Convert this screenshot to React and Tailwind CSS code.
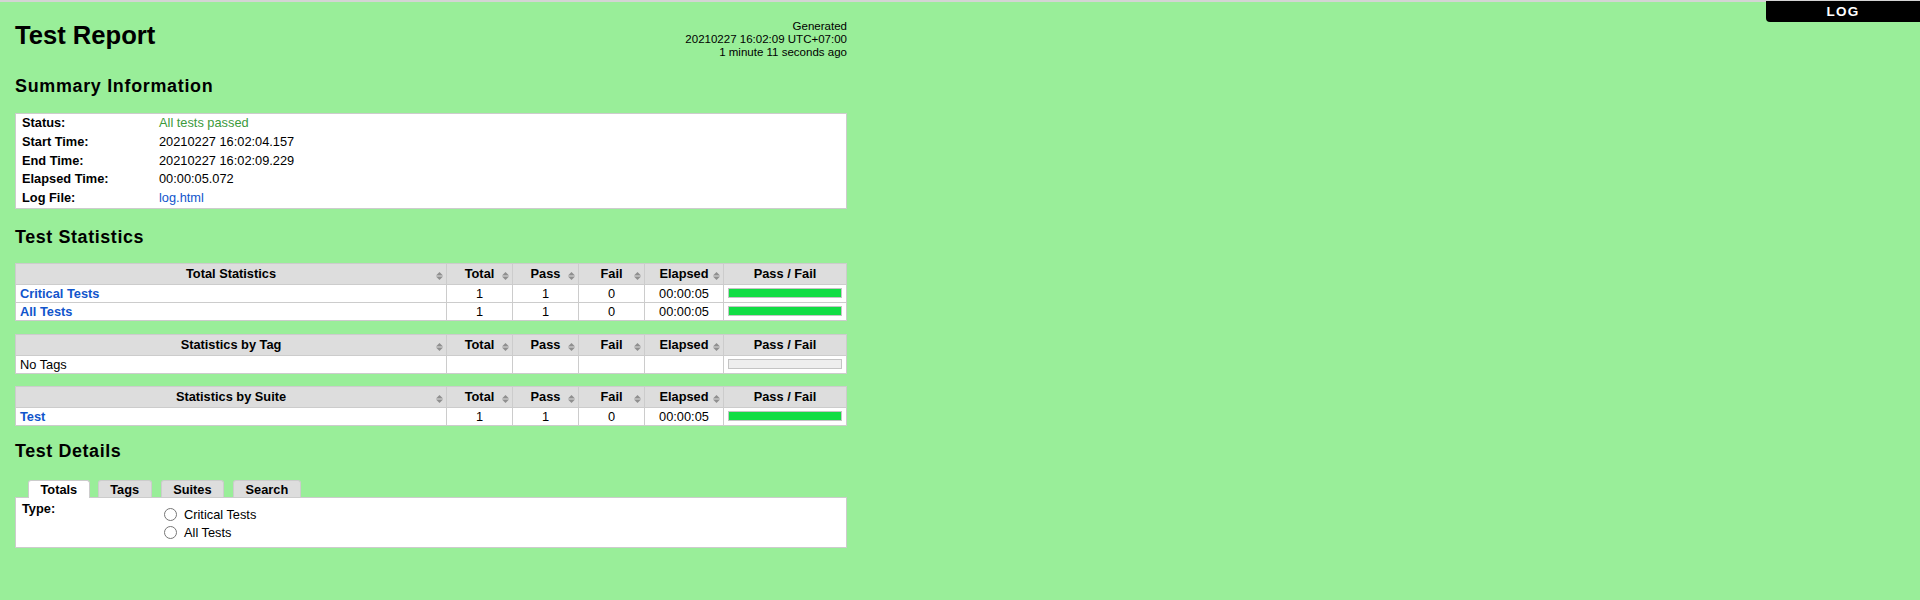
import React from "react";

const SortIcon = () => (
  <svg width="7" height="8" viewBox="0 0 7 8" className="absolute right-[3px] top-[8px]">
    <polygon points="3.5,0 7,3.5 0,3.5" fill="#8f8f8f" />
    <polygon points="0,4.5 7,4.5 3.5,8" fill="#8f8f8f" />
  </svg>
);

const HeadCell = ({ children, sort = true }) => (
  <div className="relative h-[20px] bg-[#dddddd] text-center font-bold leading-[20px]">
    {children}
    {sort && <SortIcon />}
  </div>
);

const Cell = ({ children, className = "" }) => (
  <div className={"h-[17px] bg-white leading-[17px] " + className}>{children}</div>
);

const Bar = ({ full }) => (
  <div className="flex h-[17px] items-center bg-white px-[4px]">
    <div className={"h-[10px] w-full border border-[#c4c4c4] " + (full ? "bg-[#11dd44]" : "bg-[#eeeeee]")}></div>
  </div>
);

const StatTable = ({ title, rows, className = "" }) => (
  <div className={"grid w-[832px] grid-cols-[430px_65px_65px_65px_78px_122px] gap-px border border-[#cccccc] bg-[#cccccc] " + className}>
    <HeadCell>{title}</HeadCell>
    <HeadCell>Total</HeadCell>
    <HeadCell>Pass</HeadCell>
    <HeadCell>Fail</HeadCell>
    <HeadCell>Elapsed</HeadCell>
    <HeadCell sort={false}>Pass / Fail</HeadCell>
    {rows.map((r, i) => (
      <React.Fragment key={i}>
        <Cell className={"pl-[4px] " + (r.link ? "font-bold text-[#1155cc]" : "")}>{r.name}</Cell>
        <Cell className="text-center">{r.total}</Cell>
        <Cell className="text-center">{r.pass}</Cell>
        <Cell className="text-center">{r.fail}</Cell>
        <Cell className="text-center">{r.elapsed}</Cell>
        <Bar full={r.full} />
      </React.Fragment>
    ))}
  </div>
);

const SummaryRow = ({ label, children }) => (
  <div className="flex h-[18.8px] leading-[18.8px]">
    <div className="w-[143px] shrink-0 pl-[6px] font-bold">{label}</div>
    <div>{children}</div>
  </div>
);

const Tab = ({ children, active, className = "" }) => (
  <div
    className={
      "h-[17px] rounded-t-[3px] border border-b-0 border-[#cccccc] px-[11.5px] text-center font-bold leading-[17px] " +
      (active ? "relative -mb-px h-[18px] bg-white" : "bg-[#dddddd]") +
      " " +
      className
    }
  >
    {children}
  </div>
);

const Radio = ({ label }) => (
  <div className="flex h-[18px] items-start leading-[18px]">
    <div className="mt-[2px] h-[13px] w-[13px] shrink-0 rounded-full border border-[#767676] bg-white"></div>
    <span className="ml-[7px]">{label}</span>
  </div>
);

export default function App() {
  return (
    <div className="relative min-h-[600px] bg-[#99ee99] font-['Liberation_Sans',Arial,sans-serif] text-[12.8px] text-black">
      <div className="h-[2px] bg-[#d4d4d4]"></div>
      <div className="absolute right-0 top-[1px] h-[21px] w-[154px] rounded-bl-[4px] bg-black text-center text-[13.5px] font-bold leading-[22px] tracking-[1.2px] text-white">
        LOG
      </div>

      <div className="w-[847px] pl-[15px] pt-[18px]">
        <div className="flex items-start justify-between">
          <h1 className="text-[25.6px] font-bold leading-[30px]">Test Report</h1>
          <div className="text-right text-[11.52px] leading-[13px]">
            <div>Generated</div>
            <div>20210227 16:02:09 UTC+07:00</div>
            <div>1 minute 11 seconds ago</div>
          </div>
        </div>

        <h2 className="mt-[16px] text-[17.92px] font-bold leading-[22px] tracking-[0.7px]">Summary Information</h2>
        <div className="mt-[16px] w-[832px] border border-[#cccccc] bg-white">
          <SummaryRow label="Status:">
            <span className="text-[#3c9a3c]">All tests passed</span>
          </SummaryRow>
          <SummaryRow label="Start Time:">20210227 16:02:04.157</SummaryRow>
          <SummaryRow label="End Time:">20210227 16:02:09.229</SummaryRow>
          <SummaryRow label="Elapsed Time:">00:00:05.072</SummaryRow>
          <SummaryRow label="Log File:">
            <span className="text-[#1155cc]">log.html</span>
          </SummaryRow>
        </div>

        <h2 className="mt-[17px] text-[17.92px] font-bold leading-[22px] tracking-[0.6px]">Test Statistics</h2>
        <StatTable
          className="mt-[15px]"
          title="Total Statistics"
          rows={[
            { name: "Critical Tests", link: true, total: "1", pass: "1", fail: "0", elapsed: "00:00:05", full: true },
            { name: "All Tests", link: true, total: "1", pass: "1", fail: "0", elapsed: "00:00:05", full: true },
          ]}
        />
        <StatTable
          className="mt-[13px]"
          title="Statistics by Tag"
          rows={[{ name: "No Tags", link: false, total: "", pass: "", fail: "", elapsed: "", full: false }]}
        />
        <StatTable
          className="mt-[12px]"
          title="Statistics by Suite"
          rows={[{ name: "Test", link: true, total: "1", pass: "1", fail: "0", elapsed: "00:00:05", full: true }]}
        />

        <h2 className="mt-[14px] text-[17.92px] font-bold leading-[22px] tracking-[0.6px]">Test Details</h2>
        <div className="mt-[18px] flex h-[17px] items-start pl-[13px]">
          <Tab active>Totals</Tab>
          <Tab className="ml-[8px]">Tags</Tab>
          <Tab className="ml-[9px]">Suites</Tab>
          <Tab className="ml-[9px]">Search</Tab>
        </div>
        <div className="flex h-[51px] w-[832px] border border-[#cccccc] bg-white">
          <div className="w-[148px] shrink-0 pl-[6px] pt-[1px] font-bold leading-[19px]">Type:</div>
          <div className="pt-[8px]">
            <Radio label="Critical Tests" />
            <Radio label="All Tests" />
          </div>
        </div>
      </div>
    </div>
  );
}
